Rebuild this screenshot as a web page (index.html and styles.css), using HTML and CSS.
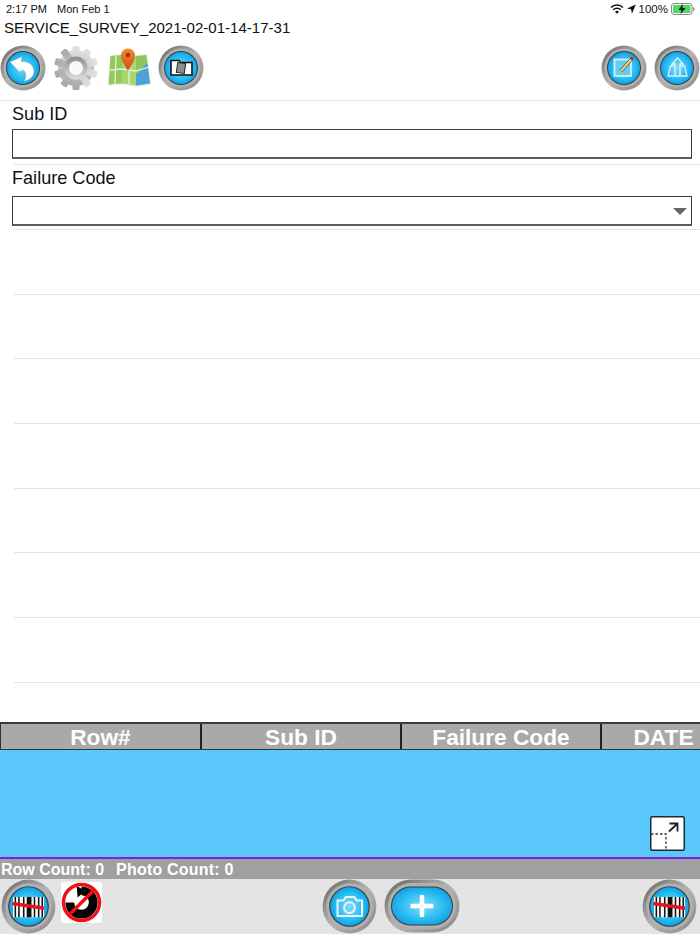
FILE: index.html
```html
<!DOCTYPE html>
<html lang="en">
<head>
<meta charset="utf-8">
<title>SERVICE_SURVEY</title>
<link rel="stylesheet" href="styles.css">
</head>
<body>
<svg class="defs" width="0" height="0" aria-hidden="true">
  <defs>
    <linearGradient id="ring" x1="0" y1="0" x2="1" y2="1">
      <stop offset="0" stop-color="#626262"/>
      <stop offset=".5" stop-color="#b4b4b4"/>
      <stop offset="1" stop-color="#858585"/>
    </linearGradient>
    <radialGradient id="blue" cx=".5" cy=".5" r=".55">
      <stop offset="0" stop-color="#7fdcfb"/>
      <stop offset=".7" stop-color="#22b8f2"/>
      <stop offset="1" stop-color="#079be0"/>
    </radialGradient>
    <linearGradient id="gearfill" x1="0" y1="0" x2="0" y2="1">
      <stop offset="0" stop-color="#e2e2e2"/>
      <stop offset="1" stop-color="#a8a8a8"/>
    </linearGradient>
    <linearGradient id="hub" x1="0" y1="0" x2="0" y2="1">
      <stop offset="0" stop-color="#8d8d8d"/>
      <stop offset="1" stop-color="#dedede"/>
    </linearGradient>
    <linearGradient id="pinfill" x1="0" y1="0" x2="0" y2="1">
      <stop offset="0" stop-color="#f08a2c"/>
      <stop offset="1" stop-color="#d9481a"/>
    </linearGradient>
    <g id="base">
      <circle cx="23" cy="23" r="22.5" fill="url(#ring)"/>
      <circle cx="23" cy="23" r="19.5" fill="#b0b0b0"/>
      <circle cx="23" cy="23" r="17" fill="#3c3c3c"/>
      <circle cx="23" cy="23" r="16" fill="url(#blue)"/>
    </g>
    <g id="barcode">
      <use href="#base"/>
      <rect x="10" y="15" width="26" height="17" fill="#fff"/>
      <path d="M12 15v17M15 15v17M19 15v17M28 15v17M31.500 15v17M34.500 15v17" stroke="#111" stroke-width="1.300"/>
      <rect x="21.500" y="15" width="4" height="17" fill="#111"/>
      <path d="M9.500 20.500L36 24.500" stroke="#e8141c" stroke-width="3"/>
    </g>
  </defs>
</svg>

<div class="status">
  <div class="status-left"><span>2:17 PM</span><span>Mon Feb 1</span></div>
  <div class="status-right">
    <svg class="wifi" width="14" height="10" viewBox="0 0 14 10"><path d="M1 3.500a8.500 8.500 0 0 1 12 0M3.200 5.700a5.400 5.400 0 0 1 7.600 0" fill="none" stroke="#111" stroke-width="1.500"/><path d="M7 9.800L5 7.700a2.900 2.900 0 0 1 4 0z" fill="#111"/></svg>
    <svg class="arrow" width="9" height="10" viewBox="0 0 9 10"><path d="M8.800.4L4.900 9.800 4.100 5.200 0 4.400z" fill="#111"/></svg>
    <span>100%</span>
    <svg class="battery" width="24" height="12" viewBox="0 0 24 12"><rect x=".5" y=".5" width="20.500" height="11" rx="2.500" fill="none" stroke="#888"/><rect x="2" y="2" width="17.500" height="8" rx="1" fill="#4cd964"/><path d="M22 4v4c1 0 1.500-1 1.500-2S23 4 22 4z" fill="#888"/><path d="M12 .8L7.500 7h3L9.500 11.200 14.500 5h-3z" fill="#111"/></svg>
  </div>
</div>

<div class="doc-title">SERVICE_SURVEY_2021-02-01-14-17-31</div>

<div class="toolbar">
  <div class="tool-group">
    <svg class="btn" viewBox="0 0 46 46"><use href="#base"/><path d="M10 17L22 11.500 21.500 16.500C29 16 34.500 21 34 27 33.500 32 29.500 35 24 36.500 26.500 32 26.500 27.500 23 25L19.500 27z" fill="#fff" stroke="#7d9fb3" stroke-width=".5"/></svg>
    <svg class="gear" viewBox="0 0 46 46">
      <g fill="url(#gearfill)">
        <circle cx="23" cy="23" r="18"/>
        <rect x="19.500" y="1" width="7" height="44" rx="1.500"/>
        <rect x="19.500" y="1" width="7" height="44" rx="1.500" transform="rotate(36 23 23)"/>
        <rect x="19.500" y="1" width="7" height="44" rx="1.500" transform="rotate(72 23 23)"/>
        <rect x="19.500" y="1" width="7" height="44" rx="1.500" transform="rotate(108 23 23)"/>
        <rect x="19.500" y="1" width="7" height="44" rx="1.500" transform="rotate(144 23 23)"/>
      </g>
      <circle cx="23" cy="23" r="11.500" fill="url(#hub)"/>
      <circle cx="23" cy="23" r="7" fill="#fafafa"/>
    </svg>
    <svg class="map" viewBox="0 0 44 44">
      <path d="M1 40L3 9 15 8 28 9 40 8 44 39 29 41 15 39z" fill="#f1f3ec"/>
      <path d="M1.500 38.500L3.500 10 15 9 15 37.500z" fill="#93c95f"/>
      <path d="M15 9L28.500 10 29 39.500 15 37.500z" fill="#a5d670"/>
      <path d="M28.500 10L39.500 9 43 37.500 29 39.500z" fill="#8cc65c"/>
      <path d="M29 28c4-1 6-5 9-9l2.500-1 2.500 19.500L29 39.500z" fill="#4f9fd8"/>
      <path d="M2.500 24L15 23 29 25 42 21M9 9.500L8 38M22 9.500V38" stroke="#e9f0dc" stroke-width="1.300" fill="none"/>
      <path d="M21 25c-2.500-6-7-9-7-15.500a7 7 0 0 1 14 0C28 16 23.500 19 21 25z" fill="url(#pinfill)"/>
      <circle cx="21" cy="9" r="2.200" fill="#9c3413"/>
    </svg>
    <svg class="btn" viewBox="0 0 46 46"><use href="#base"/><path d="M13 15.500h8l1.500 2H34V30H13z" fill="#fff" stroke="#111" stroke-width="1.600"/><rect x="19" y="18" width="8" height="10" transform="rotate(8 23 23)" fill="#8d8d8d" stroke="#222"/></svg>
  </div>
  <div class="tool-group">
    <svg class="btn" viewBox="0 0 46 46"><use href="#base"/><rect x="13.500" y="14.500" width="16.500" height="16.500" fill="#68cbf1" stroke="#d8eff8" stroke-width="1.800"/><path d="M20 26L31 13.500" stroke="#333" stroke-width="3.200"/><path d="M20 26L31 13.500" stroke="#f5dc6a" stroke-width="2"/><path d="M30 14.500l1.800-2" stroke="#e3161b" stroke-width="3"/></svg>
    <svg class="btn" viewBox="0 0 46 46"><use href="#base"/><path d="M20 21h-3.500L14 31h19l-2.500-10H27" fill="none" stroke="#d7f1fb" stroke-width="1.300"/><path d="M21 31V19H18L23.500 13 29 19H26V31" fill="none" stroke="#e6f7fd" stroke-width="1.300"/></svg>
  </div>
</div>

<form class="form">
  <div class="field">
    <div class="field-label">Sub ID</div>
    <div class="input"></div>
  </div>
  <div class="field field-select">
    <div class="field-label">Failure Code</div>
    <div class="input select"><span class="caret"></span></div>
  </div>
</form>

<div class="rows">
  <div class="row"></div>
  <div class="row"></div>
  <div class="row"></div>
  <div class="row"></div>
  <div class="row"></div>
  <div class="row"></div>
  <div class="row"></div>
</div>

<div class="thead">
  <div class="th">Row#</div>
  <div class="th">Sub ID</div>
  <div class="th">Failure Code</div>
  <div class="th">DATE</div>
</div>

<div class="tbody">
  <svg class="expand" width="35" height="35" viewBox="0 0 35 35">
    <rect x=".75" y=".75" width="33.500" height="33.500" rx="1.500" fill="#fff" stroke="#1c2a33" stroke-width="1.500"/>
    <path d="M1 18h15v16" fill="none" stroke="#333" stroke-width="1.300" stroke-dasharray="2.500 2"/>
    <path d="M19 15.500L27 8M19.500 7.500H27.500V15.500" fill="none" stroke="#222" stroke-width="1.800"/>
  </svg>
</div>

<div class="counts"><span>Row Count: 0</span><span class="photo-count">Photo Count: 0</span></div>

<div class="bottom">
  <div class="bottom-left">
    <svg class="big" viewBox="0 0 46 46"><use href="#barcode"/></svg>
    <div class="no-rotate">
      <svg width="41" height="41" viewBox="0 0 42 42">
        <path d="M21 9a12 12 0 1 1-12 12" fill="none" stroke="#000" stroke-width="9"/>
        <path d="M16 4l9 5-8 7z" fill="#000"/>
        <circle cx="21" cy="21" r="18.500" fill="none" stroke="#f00f14" stroke-width="3.500"/>
        <path d="M34 8L8 34" stroke="#f00f14" stroke-width="3.500"/>
      </svg>
    </div>
  </div>
  <div class="bottom-center">
    <svg class="big" viewBox="0 0 46 46"><use href="#base"/><path d="M13 18h5l2-3h7l2 3h4.500v13H13z" fill="none" stroke="#e8f6fc" stroke-width="1.700"/><circle cx="23" cy="24" r="4.500" fill="none" stroke="#e8f6fc" stroke-width="1.700"/></svg>
    <svg class="pill" viewBox="0 0 76 54">
      <defs>
        <radialGradient id="pillblue" cx=".5" cy=".5" r=".6"><stop offset="0" stop-color="#84def9"/><stop offset=".6" stop-color="#2bbcf2"/><stop offset="1" stop-color="#089ce1"/></radialGradient>
      </defs>
      <rect x=".5" y=".5" width="75" height="53" rx="26.500" fill="url(#ring)"/>
      <rect x="4" y="4" width="68" height="46" rx="23" fill="#b0b0b0"/>
      <rect x="7" y="7.500" width="62" height="39" rx="19.500" fill="#3c3c3c"/>
      <rect x="8" y="8.500" width="60" height="37" rx="18.500" fill="url(#pillblue)"/>
      <path d="M38 16v22M26.500 27h23" stroke="#fff" stroke-width="4.500"/>
    </svg>
  </div>
  <svg class="big" viewBox="0 0 46 46"><use href="#barcode"/></svg>
</div>
</body>
</html>
```

FILE: styles.css
```css
* { box-sizing: border-box; }

html, body {
  margin: 0;
  padding: 0;
}

body {
  width: 700px;
  height: 934px;
  overflow: hidden;
  background: #fff;
  color: #111;
  font-family: "Liberation Sans", Arial, sans-serif;
  display: flex;
  flex-direction: column;
}

.defs { position: absolute; }

.status {
  height: 18px;
  display: flex;
  justify-content: space-between;
  align-items: center;
  padding: 0 5px 0 6px;
  font-size: 11px;
}

.status-left { display: flex; gap: 10px; }

.status-right {
  display: flex;
  align-items: center;
  gap: 3px;
  font-size: 11.500px;
}

.doc-title {
  height: 21px;
  padding-left: 4px;
  font-size: 15.050px;
  line-height: 20px;
  white-space: nowrap;
}

.toolbar {
  height: 62px;
  padding-top: 6px;
  display: flex;
  justify-content: space-between;
  align-items: flex-start;
  border-bottom: 1px solid #e4e4e4;
}

.tool-group {
  display: flex;
  align-items: center;
  gap: 7px;
}

.btn { width: 46px; height: 46px; display: block; }
.gear { width: 46px; height: 46px; display: block; }
.map { width: 44px; height: 44px; display: block; margin-left: 1px; }

.field {
  height: 64px;
  padding: 3px 8px 0 12px;
  position: relative;
}

.field::after {
  content: "";
  position: absolute;
  left: 14px;
  right: 0;
  bottom: 0;
  border-bottom: 1px solid #e4e4e4;
}

.field-select { height: 65px; }

.field-label {
  height: 25px;
  font-size: 18.100px;
  line-height: 20px;
}

.input {
  height: 30px;
  border: 1px solid #3f3f3f;
  border-bottom: 2px solid #5d5d5d;
  background: #fff;
  position: relative;
}

.select { margin-top: 3px; }

.caret {
  position: absolute;
  right: 4px;
  top: 11px;
  width: 0;
  height: 0;
  border-left: 7px solid transparent;
  border-right: 7px solid transparent;
  border-top: 7px solid #666;
}

.rows {
  height: 492px;
  display: flex;
  flex-direction: column;
}

.row {
  height: 64.670px;
  flex: none;
  margin-left: 14px;
  border-bottom: 1px solid #e4e4e4;
}

.thead {
  height: 28px;
  display: grid;
  grid-template-columns: 201px 200px 200px 123px;
  overflow: hidden;
  background: #a9a9a9;
  border-top: 2px solid #3a3a3a;
  border-bottom: 1px solid #333;
  border-left: 1px solid #333;
}

.th {
  display: flex;
  align-items: center;
  justify-content: center;
  padding-bottom: 2px;
  color: #fff;
  font-size: 22.700px;
  font-weight: bold;
  border-right: 2px solid #222;
}

.th:last-child { border-right: 0; }

.tbody {
  height: 107px;
  background: #5ac8fa;
  display: flex;
  justify-content: flex-end;
  align-items: flex-end;
  padding: 0 15px 6px 0;
}

.counts {
  height: 22px;
  border-top: 2px solid #7a1fe6;
  background: #a0a0a0;
  color: #fff;
  font-size: 16px;
  font-weight: bold;
  line-height: 20px;
  padding: 1px 0 0 1px;
  display: flex;
  gap: 12px;
}

.photo-count { letter-spacing: .2px; }

.bottom {
  flex: 1;
  background: #e4e4e4;
  display: flex;
  justify-content: space-between;
  align-items: flex-start;
  padding: 0 3px 0 1px;
}

.big { width: 55px; height: 55px; flex: none; display: block; }

.bottom-left {
  display: flex;
  align-items: flex-start;
  gap: 5px;
}

.no-rotate {
  width: 41px;
  height: 41px;
  margin-top: 3px;
  background: #fff;
  border-radius: 3px;
  overflow: hidden;
}

.no-rotate svg { display: block; }

.bottom-center {
  display: flex;
  align-items: flex-start;
  gap: 7px;
  margin-left: 37px;
}

.pill { width: 76px; height: 54px; display: block; }
```
